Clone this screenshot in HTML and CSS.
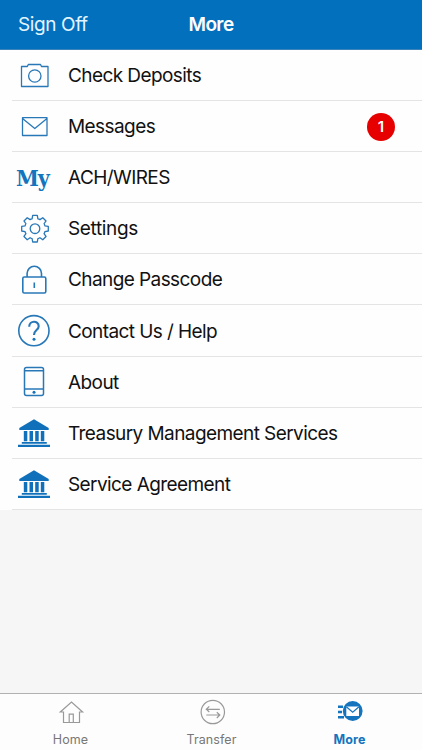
FILE: index.html
```html
<!DOCTYPE html>
<html lang="en">
<head>
    <meta charset="UTF-8">
    <meta name="viewport" content="width=device-width, initial-scale=1.0">
    <title>More</title>
    <link rel="stylesheet" href="styles.css">
</head>
<body>
    <header class="header">
        <a class="sign-off">Sign Off</a>
        <h1 class="title">More</h1>
    </header>

    <ul class="menu">
        <li class="item">
            <svg class="icon" viewBox="0 0 36 36"><path d="M5.5 8.5H11.3L12.3 6.5H24.5L25.5 8.5H32V28.5H5.5Z"/><circle cx="18.8" cy="18" r="6.2"/></svg>
            <span class="label">Check Deposits</span>
        </li>
        <li class="item">
            <svg class="icon" viewBox="0 0 36 36"><path d="M6.5 8.7H31V26.5H6.5ZM6.5 9.5L18.8 19.5L31 9.5"/></svg>
            <span class="label">Messages</span>
            <span class="badge">1</span>
        </li>
        <li class="item">
            <span class="icon my">My</span>
            <span class="label">ACH/WIRES</span>
        </li>
        <li class="item">
            <svg class="icon" viewBox="-19 -17.7 36 36"><path d="M-2.9-9.9L-2.3-13.3H2.3L2.9-9.9Q4-9.7 4.95-9.05L7.78-11.03L11.03-7.78L9.05-4.95Q9.7-4 9.9-2.9L13.3-2.3V2.3L9.9 2.9Q9.7 4 9.05 4.95L11.03 7.78L7.78 11.03L4.95 9.05Q4 9.7 2.9 9.9L2.3 13.3H-2.3L-2.9 9.9Q-4 9.7-4.95 9.05L-7.78 11.03L-11.03 7.78L-9.05 4.95Q-9.7 4-9.9 2.9L-13.3 2.3V-2.3L-9.9-2.9Q-9.7-4-9.05-4.95L-11.03-7.78L-7.78-11.03L-4.95-9.05Q-4-9.7-2.9-9.9Z"/><circle r="4.8"/></svg>
            <span class="label settings">Settings</span>
        </li>
        <li class="item">
            <svg class="icon bold" viewBox="0 0 36 36"><rect x="6.8" y="15" width="23" height="16" rx="1.5"/><path d="M11.1 15V11.5A7.2 7.2 0 0 1 25.5 11.5V15M18.3 20.5V26"/></svg>
            <span class="label">Change Passcode</span>
        </li>
        <li class="item">
            <svg class="icon bold" viewBox="0 0 36 36"><circle cx="17.9" cy="17.7" r="15.1"/><path class="thick" d="M13.2 13.7C13.2 7.2 22.7 7.3 22.7 13.2C22.7 17.2 18 17 18 21.9"/><circle class="solid" cx="18" cy="26.2" r="1.5"/></svg>
            <span class="label">Contact Us / Help</span>
        </li>
        <li class="item">
            <svg class="icon phone" viewBox="0 0 36 36"><rect x="8.5" y="3.5" width="19" height="28" rx="2"/><path d="M8.5 6.7H27.5M8.5 25H27.5"/><circle class="solid" cx="18" cy="28.3" r="1.5"/></svg>
            <span class="label">About</span>
        </li>
        <li class="item">
            <svg class="icon filled" viewBox="0 0 36 36"><path d="M18 4.2L32.7 13V15H3.3V13ZM7.8 16H11.3V26.3H7.8ZM13.5 16H17V26.3H13.5ZM19.2 16H22.7V26.3H19.2ZM24.8 16H28.3V26.3H24.8ZM5.8 27H30.8V28.7H5.8ZM2 29.7H34V32H2Z"/></svg>
            <span class="label">Treasury Management Services</span>
        </li>
        <li class="item">
            <svg class="icon filled" viewBox="0 0 36 36"><path d="M18 4.2L32.7 13V15H3.3V13ZM7.8 16H11.3V26.3H7.8ZM13.5 16H17V26.3H13.5ZM19.2 16H22.7V26.3H19.2ZM24.8 16H28.3V26.3H24.8ZM5.8 27H30.8V28.7H5.8ZM2 29.7H34V32H2Z"/></svg>
            <span class="label">Service Agreement</span>
        </li>
    </ul>

    <nav class="tabs">
        <a class="tab">
            <svg class="tab-icon" viewBox="0 0 28 28"><path d="M6.5 14H3.3L14.5 4L25.6 14H22.5V24.5H6.5ZM12.2 24.5V16.2H16.3V24.5"/></svg>
            <span>Home</span>
        </a>
        <a class="tab">
            <svg class="tab-icon" viewBox="0 0 28 28"><circle cx="14.8" cy="14" r="11.7"/><path d="M21.8 11.3H8.3M11.3 8.3L8.3 11.3L11.3 14M8.3 17H21.8M18.8 14.3L21.8 17L18.8 20"/></svg>
            <span>Transfer</span>
        </a>
        <a class="tab active">
            <svg class="tab-icon" viewBox="0 0 28 28"><circle class="solid" cx="16.7" cy="13" r="9.9"/><path class="speed" d="M2 8.7H7M2 14H6M2 19.3H8"/><path class="envelope" d="M10.3 8.5H23V18H10.3Z"/><path class="flap" d="M10.3 8.7L16.7 14.2L23 8.7"/></svg>
            <span>More</span>
        </a>
    </nav>
</body>
</html>
```

FILE: styles.css
```css
* {
    box-sizing: border-box;
}
body {
    margin: 0;
    height: 100vh;
    display: flex;
    flex-direction: column;
    background-color: #f6f6f6;
    font-family: Inter, "Liberation Sans", sans-serif;
}
.header {
    height: 50px;
    flex: none;
    display: grid;
    grid-template-columns: 1fr auto 1fr;
    align-items: center;
    padding: 0 18px;
    background-color: #0370bd;
    border-bottom: 1px solid #3a83bb;
    color: white;
}
.sign-off {
    font-size: 19px;
    letter-spacing: -0.4px;
    color: #e3f5ff;
}
.title {
    margin: 0;
    font-size: 19px;
    font-weight: 600;
    letter-spacing: -0.6px;
}
.menu {
    list-style: none;
    margin: 0;
    padding: 0;
    background-color: #fefefe;
}
.item {
    height: 51.1px;
    display: flex;
    align-items: center;
    gap: 16px;
    padding: 0 27px 0 16px;
    background: linear-gradient(#e4e4e4, #e4e4e4) 12px 100% / 100% 1px no-repeat;
}
.icon {
    width: 36px;
    height: 36px;
    flex: none;
    fill: none;
    stroke: #2878b8;
    stroke-width: 1.3;
    stroke-linejoin: round;
}
.bold {
    stroke-width: 1.6;
}
.phone {
    stroke-width: 1.5;
}
.thick {
    stroke-width: 2.1;
}
.filled {
    fill: #1170ba;
    stroke: none;
}
.solid {
    fill: #1474bd;
    stroke: none;
}
.my {
    display: flex;
    align-items: center;
    font-family: "DejaVu Serif Condensed", "DejaVu Serif", serif;
    font-size: 23px;
    font-stretch: condensed;
    font-weight: bold;
    letter-spacing: -1.2px;
    color: #1474bd;
}
.label {
    font-size: 19px;
    letter-spacing: -0.58px;
    color: #111;
    white-space: nowrap;
}
.settings {
    letter-spacing: -0.35px;
}
.badge {
    width: 28px;
    height: 28px;
    margin-left: auto;
    border-radius: 50%;
    background-color: #e60000;
    color: white;
    font-size: 15px;
    font-weight: 600;
    line-height: 28px;
    text-align: center;
}
.tabs {
    height: 57px;
    margin-top: auto;
    display: grid;
    grid-template-columns: 141px 141px 135px;
    border-top: 1px solid #b2b2b2;
    background-color: #fdfdfd;
}
.tab {
    display: flex;
    flex-direction: column;
    align-items: center;
    padding-top: 4px;
    color: #777;
    font-size: 12.5px;
    letter-spacing: 0.1px;
}
.tab-icon {
    width: 28px;
    height: 28px;
    margin-bottom: 6px;
    fill: none;
    stroke: #999;
    stroke-width: 1.2;
}
.active {
    color: #1474bd;
    font-weight: 700;
}
.tab-icon .speed {
    stroke: #1474bd;
    stroke-width: 2.4;
}
.envelope {
    fill: white;
    stroke: none;
}
.flap {
    stroke: #1474bd;
}
```
